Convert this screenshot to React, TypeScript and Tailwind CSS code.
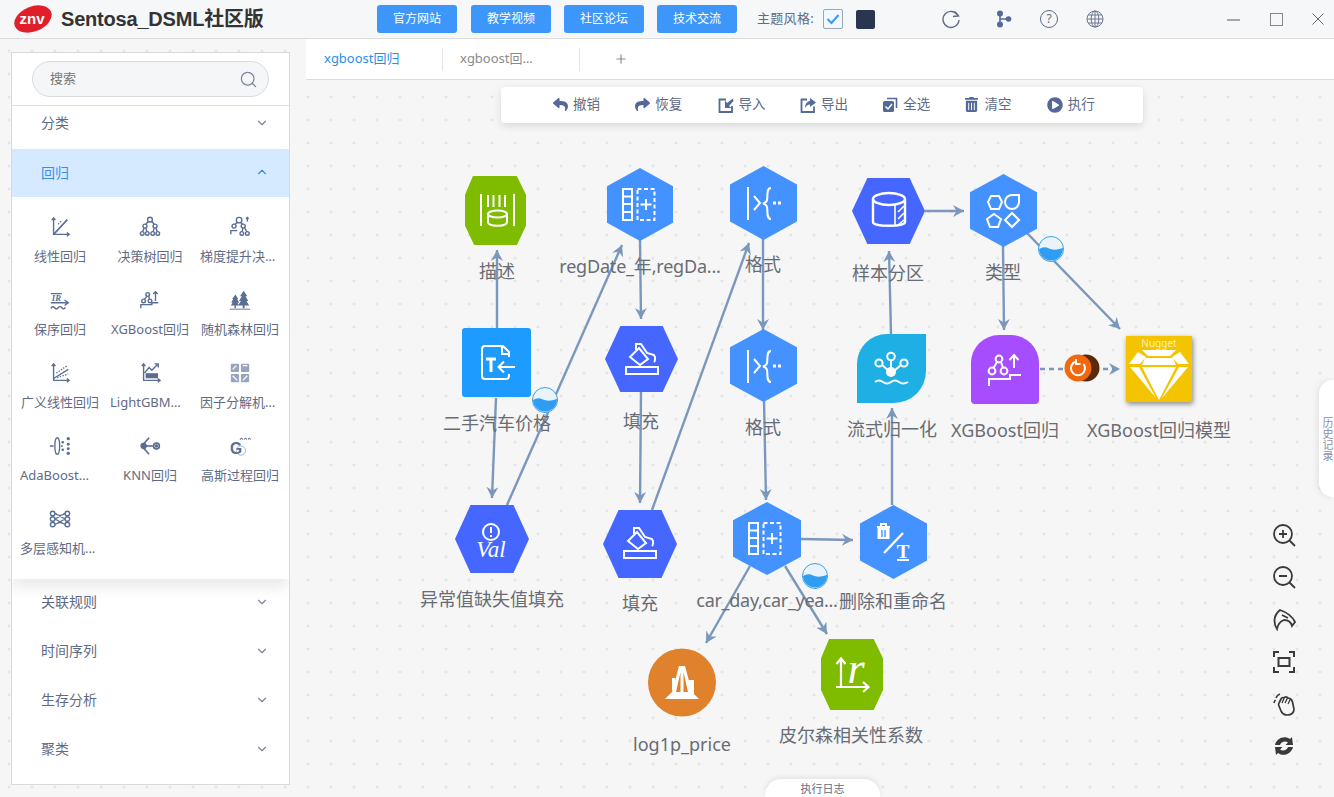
import React from "react";
import { FaReply, FaShare, FaTrashAlt, FaPlayCircle } from "react-icons/fa";
import { ChevronDown, ChevronUp, Search, Plus } from "lucide-react";

const ptHex = (w: number, h: number) => `${w / 2},0 ${w},${h * 0.25} ${w},${h * 0.75} ${w / 2},${h} 0,${h * 0.75} 0,${h * 0.25}`;
const flatHex = (w: number, h: number) => `${w * 0.21},0 ${w * 0.79},0 ${w},${h / 2} ${w * 0.79},${h} ${w * 0.21},${h} 0,${h / 2}`;
const octa = (w: number, h: number) => `${w * 0.13},0 ${w * 0.85},0 ${w},${h * 0.27} ${w},${h * 0.72} ${w * 0.85},${h} ${w * 0.15},${h} 0,${h * 0.72} 0,${h * 0.27}`;

const W = { fill: "none", stroke: "#fff", strokeWidth: 2 } as const;

const DatasetIcon = () => (
  <g {...W}>
    <rect x="16" y="21" width="9" height="31" />
    <path d="M16 28.5H25M16 36H25M16 44H25" />
    <rect x="30.5" y="21" width="17" height="31" strokeDasharray="4 2.5" />
    <path d="M39 31V42M33.5 36.5H44.5" />
  </g>
);
const FormatIcon = () => (
  <g {...W}>
    <path d="M18 21V54M24 30L30 37L24 44" />
    <path d="M41 22C36 22 38 30 37 34C36.5 36 35 37 33 37.5C35 38 36.5 39 37 41C38 45 36 53 41 53" />
    <path d="M43 37H46M48 37H51" strokeWidth="3" />
  </g>
);
const FillIcon = () => (
  <g {...W}>
    <rect x="21" y="41" width="32" height="7" />
    <path d="M25 31L34 22L43 33L35 39Z" />
    <path d="M31 24L31 18H36L42 27L49 29C51 32 50 35 49 36" />
  </g>
);
const Bubble = ({ cls }: { cls: string }) => (
  <svg className={`absolute ${cls}`} width="28" height="28" viewBox="0 0 28 28">
    <circle cx="14" cy="14" r="12.5" fill="#eaf3fa" stroke="#3aa0ea" strokeWidth="1" />
    <path d="M2 14Q7 11 12 13.5T26 13A12 12 0 0 1 2 14Z" fill="#2f9df2" />
  </svg>
);

function Label({ cls, children }: { cls: string; children: React.ReactNode }) {
  return <div className={`absolute -translate-x-1/2 -translate-y-1/2 whitespace-nowrap text-[18px] leading-6 text-[#686c74] ${cls}`}>{children}</div>;
}

function Diagram() {
  const edges = [
    [497, 328, 497, 250], [496, 398, 492, 498], [507, 505, 622, 245], [640, 240, 641, 319], [641, 392, 640, 503],
    [652, 510, 749, 243], [763, 238, 763, 330], [764, 400, 766, 500], [801, 539, 853, 540], [750, 566, 706, 643],
    [785, 566, 827, 634], [892, 505, 892, 408], [891, 334, 889, 251], [925, 211, 964, 211], [1003, 245, 1004, 330], [1027, 233, 1120, 329],
  ];
  return (
    <div className="absolute left-[-306px] top-[-80px] h-[797px] w-[1334px]">
      <svg className="absolute left-0 top-0" width="1334" height="797">
        <defs>
          <marker id="ah" markerUnits="userSpaceOnUse" markerWidth="14" markerHeight="14" refX="11" refY="6" orient="auto">
            <path d="M0 0L11 6L0 12L3.5 6Z" fill="#7b98bc" />
          </marker>
        </defs>
        {edges.map((e, i) => (
          <line key={i} x1={e[0]} y1={e[1]} x2={e[2]} y2={e[3]} stroke="#7b98bc" strokeWidth="2.4" markerEnd="url(#ah)" />
        ))}
        <line x1="1040" y1="369" x2="1120" y2="369" stroke="#7b98bc" strokeWidth="2.4" strokeDasharray="5 4" markerEnd="url(#ah)" />
      </svg>

      <svg className="absolute left-[465px] top-[176px]" width="61" height="69">
        <polygon points={octa(61, 69)} fill="#7fbc00" />
        <g {...W}>
          <path d="M16 18V50M49 18V50M23 19V31M28.5 19V31M34.5 19V31M40 19V31" />
          <ellipse cx="32.5" cy="38" rx="9.5" ry="3.5" />
          <path d="M23 38V46C23 51 42 51 42 46V38" />
        </g>
      </svg>

      <svg className="absolute left-[607px] top-[168px]" width="66" height="73">
        <polygon points={ptHex(66, 73)} fill="#4392ff" />
        <DatasetIcon />
      </svg>
      <svg className="absolute left-[730px] top-[166px]" width="67" height="74">
        <polygon points={ptHex(67, 74)} fill="#4392ff" />
        <FormatIcon />
      </svg>
      <svg className="absolute left-[730px] top-[329px]" width="67" height="73">
        <polygon points={ptHex(67, 73)} fill="#4392ff" />
        <FormatIcon />
      </svg>

      <svg className="absolute left-[852px] top-[178px]" width="73" height="66">
        <polygon points={flatHex(73, 66)} fill="#4566ff" />
        <g {...W} strokeWidth="2.4">
          <ellipse cx="37" cy="21" rx="16" ry="6" />
          <path d="M21 21V44C21 49 53 49 53 44V21" />
          <path d="M43 27V47M46 34L52 28M46 41L52 35M46 47L52 42" strokeWidth="1.6" />
        </g>
      </svg>

      <svg className="absolute left-[970px] top-[174px]" width="67" height="73">
        <polygon points={ptHex(67, 73)} fill="#4392ff" />
        <g {...W}>
          <polygon points="21,22 29,22 32,28 29,35 21,35 18,28" />
          <path d="M42 21H49V28A7 7 0 1 1 35 28A7 7 0 0 1 42 21Z" />
          <polygon points="24,40 31,45 28,53 20,53 17,45" />
          <polygon points="42,39 49,46 42,53 35,46" />
        </g>
      </svg>

      <svg className="absolute left-[462px] top-[328px]" width="69" height="69">
        <rect width="69" height="69" rx="3" fill="#1e9bff" />
        <g {...W}>
          <path d="M47 29V24L41 18H23A3 3 0 0 0 20 21V48A3 3 0 0 0 23 51H44A3 3 0 0 0 47 48V46" />
          <path d="M40 18V26H47" />
          <path d="M24 31H34M29 31V44" strokeWidth="3" />
          <path d="M53 39H37M42 33.5L36.5 39L42 44.5" />
        </g>
      </svg>

      <svg className="absolute left-[605px] top-[326px]" width="73" height="66">
        <polygon points={flatHex(73, 66)} fill="#4566ff" />
        <FillIcon />
      </svg>

      <svg className="absolute left-[857px] top-[334px]" width="69" height="69">
        <path d="M30 0H69V37A32 32 0 0 1 37 69H0V30A30 30 0 0 1 30 0Z" fill="#1eb0e4" />
        <g {...W}>
          <circle cx="22" cy="29" r="3.6" />
          <circle cx="34" cy="22.5" r="3.8" />
          <circle cx="47" cy="29" r="3.6" />
          <path d="M25 31L32 37M34 27V35M44 31L37 37" />
          <path d="M18 48Q22 45 26 48T34 48T42 48T51 48" />
        </g>
        <circle cx="34" cy="38" r="5" fill="#fff" />
      </svg>

      <svg className="absolute left-[971px] top-[335px]" width="68" height="69">
        <path d="M28 0H40A28 28 0 0 1 68 28V65A4 4 0 0 1 64 69H4A4 4 0 0 1 0 65V28A28 28 0 0 1 28 0Z" fill="#a64dff" />
        <g {...W}>
          <circle cx="28" cy="24" r="3.4" />
          <circle cx="21" cy="36" r="3.4" />
          <circle cx="33" cy="36" r="3.4" />
          <path d="M26 27L22.5 33M30 27L32 33" />
          <path d="M43 33V21M38.5 25L43 20L47.5 25" />
          <path d="M18 51V44H39V40H50" />
        </g>
      </svg>

      <div className="absolute left-[1126px] top-[336px] h-[66px] w-[66px] bg-[#f5c400] shadow-[1px_2px_5px_rgba(0,0,0,0.45)]">
        <div className="text-center text-[10px] leading-[14px] text-[#fdf0b8]">Nugget</div>
        <svg className="absolute left-0 top-0" width="66" height="66">
          <path d="M16 14H50L44 20H22Z M12 16L20 21L14 28H3Z M54 16L46 21L52 28H63Z M19 22H47L50 29H16Z M16 31H50L33 64Z M4 31H13L30 62Z M62 31H53L36 62Z" fill="#fff" />
        </svg>
      </div>

      <svg className="absolute left-[1063px] top-[354px]" width="38" height="30">
        <circle cx="23" cy="14" r="13.5" fill="#5c2a08" />
        <circle cx="15" cy="14" r="13.5" fill="#f2680c" />
        <path d="M13 7.5A7 7 0 1 0 20.5 10M13 5V10H17.5" fill="none" stroke="#fff" strokeWidth="2" />
      </svg>

      <svg className="absolute left-[455px] top-[505px]" width="74" height="68">
        <polygon points={flatHex(74, 68)} fill="#4566ff" />
        <circle cx="36" cy="27" r="8" {...W} />
        <path d="M36 22V28M36 30V32" {...W} />
        <text x="36" y="52" textAnchor="middle" fill="#fff" fontSize="23" fontStyle="italic" fontFamily="Liberation Serif, serif">Val</text>
      </svg>

      <svg className="absolute left-[603px] top-[510px]" width="74" height="68">
        <polygon points={flatHex(74, 68)} fill="#4566ff" />
        <FillIcon />
      </svg>

      <svg className="absolute left-[733px] top-[502px]" width="68" height="73">
        <polygon points={ptHex(68, 73)} fill="#4392ff" />
        <DatasetIcon />
      </svg>

      <svg className="absolute left-[860px] top-[505px]" width="67" height="74">
        <polygon points={ptHex(67, 74)} fill="#4392ff" />
        <g {...W}>
          <path d="M17 22H30M21 22V19H26V22" />
          <path d="M18.5 24H28.5V33H18.5Z" fill="#fff" />
          <path d="M22 25V32M25 25V32" strokeWidth="1.4" stroke="#4392ff" />
          <path d="M24 48L43 28" strokeWidth="2.4" />
          <path d="M37 55H49" />
        </g>
        <text x="43" y="53" textAnchor="middle" fill="#fff" fontSize="19" fontWeight="bold" fontFamily="Liberation Serif, serif">T</text>
      </svg>

      <svg className="absolute left-[648px] top-[648px]" width="68" height="69">
        <circle cx="34" cy="34.5" r="34" fill="#e0812b" />
        <g fill="#fff">
          <path d="M17 51L24 44H44L51 51Z" />
          <path d="M31 18H37L44 44H40L35.5 24V44H32.5V24L28 44H24Z" />
          <path d="M24 30H27V42H24ZM41 32H46V46H41Z" />
        </g>
      </svg>

      <svg className="absolute left-[821px] top-[639px]" width="62" height="71">
        <polygon points={octa(62, 71)} fill="#7fbc00" />
        <g {...W} strokeWidth="2.2">
          <path d="M20 48V20M15.5 25L20 19.5L24.5 25" />
          <path d="M15 48H47M42 43L47.5 48L42 53" />
        </g>
        <text x="35" y="44" textAnchor="middle" fill="#fff" fontSize="44" fontStyle="italic" fontFamily="Liberation Serif, serif">r</text>
      </svg>

      <Bubble cls="left-[531px] top-[386px]" />
      <Bubble cls="left-[1037px] top-[235px]" />
      <Bubble cls="left-[801px] top-[562px]" />

      <Label cls="left-[497px] top-[271px]">描述</Label>
      <Label cls="left-[640px] top-[266px] tracking-[-0.2px]">regDate_年,regDa...</Label>
      <Label cls="left-[763px] top-[264px]">格式</Label>
      <Label cls="left-[888px] top-[273px]">样本分区</Label>
      <Label cls="left-[1003px] top-[272px]">类型</Label>
      <Label cls="left-[497px] top-[423px]">二手汽车价格</Label>
      <Label cls="left-[641px] top-[421px]">填充</Label>
      <Label cls="left-[763px] top-[427px]">格式</Label>
      <Label cls="left-[892px] top-[429px]">流式归一化</Label>
      <Label cls="left-[1005px] top-[430px]">XGBoost回归</Label>
      <Label cls="left-[1159px] top-[430px]">XGBoost回归模型</Label>
      <Label cls="left-[492px] top-[599px]">异常值缺失值填充</Label>
      <Label cls="left-[640px] top-[603px]">填充</Label>
      <Label cls="left-[767px] top-[600px] tracking-[-0.3px]">car_day,car_yea...</Label>
      <Label cls="left-[893px] top-[601px]">删除和重命名</Label>
      <Label cls="left-[682px] top-[744px]">log1p_price</Label>
      <Label cls="left-[851px] top-[735px]">皮尔森相关性系数</Label>
    </div>
  );
}

const S = { fill: "none", stroke: "#5a6d93", strokeWidth: 1.5 } as const;
const modelIcons: [string, React.ReactNode][] = [
  ["线性回归", <g {...S}><path d="M5 2V20H22M3 4.5L5 2L7 4.5M19.5 18L22 20L19.5 22" /><path d="M5 20L20 4" strokeWidth="1.8" /><path d="M10 9L14 5" strokeDasharray="1.5 1.5" /></g>],
  ["决策树回归", <g {...S}><circle cx="12" cy="4" r="2.6" /><circle cx="6.5" cy="11" r="2.2" /><circle cx="17.5" cy="11" r="2.2" /><circle cx="3.5" cy="19" r="2" /><circle cx="9" cy="19" r="2" /><circle cx="15" cy="19" r="2" /><circle cx="20.5" cy="19" r="2" /><path d="M10 6L7.5 9M14 6L16.5 9M5.5 13L4 17M7.5 13L8.5 17M16.5 13L15.5 17M18.5 13L20 17" /></g>],
  ["梯度提升决策树回归", <g {...S}><circle cx="11" cy="4.5" r="3" /><circle cx="5.5" cy="11" r="2.2" /><circle cx="15.5" cy="11" r="2.2" /><circle cx="14" cy="19" r="2" /><circle cx="20" cy="19" r="2" /><path d="M9 7L6.5 9M13 7L15 9M15 13L14.5 17M17 13L19.5 17M2 20V16H9M20 6V1.5M18.5 3L20 1.5L21.5 3" /></g>],
  ["保序回归", <g {...S}><path d="M2 5H14M2 15H20M17 12L21 15L17 18" /><path d="M2 21Q4 18 6 20.5T10 20.5T14 20.5T18 20" /><text x="3" y="13" fontSize="9.5" fontStyle="italic" fontWeight="bold" fill="#5a6d93" stroke="none" fontFamily="Liberation Serif, serif">IR</text></g>],
  ["XGBoost回归", <g {...S}><circle cx="9.5" cy="6" r="2" /><circle cx="5" cy="13" r="2" /><circle cx="12" cy="13" r="2" /><path d="M8.5 8L6 11M10.5 8L11.5 11M18 13V3M15.5 5.5L18 3L20.5 5.5M2 21V17H14V15H21" /></g>],
  ["随机森林回归", <g fill="#5a6d93" stroke="none"><path d="M16 2L20 8H18L21 13H19L22 18H17V21H15V18H10L13 13H11L14 8H12Z" /><path d="M7 6L10 11H9L11 15H9L11 18H7.5V21H6V18H2L4 15H2.5L4.5 11H3.5Z" /><path d="M1 21.5H23V22.5H1Z" /></g>],
  ["广义线性回归", <g {...S}><path d="M5 2V20H22M3 4.5L5 2L7 4.5M19.5 18L22 20L19.5 22" /><path d="M5 18L21 8" /><path d="M8 12L20 4M9 17L21 13" strokeDasharray="1.5 1.5" /></g>],
  ["LightGBM回归", <g {...S}><path d="M5 2V20H23M3 4.5L5 2L7 4.5M20.5 18L23 20L20.5 22" /><path d="M6 12L11 6L14 9L21 2M17 2H21V6" /><rect x="8" y="13" width="12" height="4" fill="#5a6d93" /></g>],
  ["因子分解机回归", <g fill="#9aa5bc" stroke="none"><rect x="2" y="2" width="9" height="9" rx="1" /><rect x="13" y="2" width="9" height="9" rx="1" /><rect x="2" y="13" width="9" height="9" rx="1" /><rect x="13" y="13" width="9" height="9" rx="1" /><path d="M4 8L8 4M15 4H20M4 15L9 20M15 20L20 15" stroke="#fff" strokeWidth="1.4" /></g>],
  ["AdaBoost回归", <g {...S}><ellipse cx="9" cy="12" rx="2.6" ry="9" /><path d="M1 12H5M13 12H15" /><g fill="#5a6d93" stroke="none"><circle cx="15" cy="8" r="1.4" /><circle cx="15" cy="16" r="1.4" /><circle cx="21" cy="4" r="1.8" /><circle cx="21" cy="10" r="1.6" /><circle cx="21" cy="15" r="1.6" /><circle cx="21" cy="20" r="1.8" /></g></g>],
  ["KNN回归", <g {...S} strokeWidth="1.8"><path d="M11 3L3 12L11 21" /><path d="M5 12H15" /><circle cx="5" cy="12" r="2.6" fill="#5a6d93" /><circle cx="19" cy="12" r="3.2" /><circle cx="19" cy="12" r="1" fill="#5a6d93" /></g>],
  ["高斯过程回归", <g><text x="1" y="21" fontSize="17" fontWeight="bold" fill="#5a6d93" fontFamily="Liberation Sans, sans-serif">G</text><circle cx="13" cy="17" r="5" fill="none" stroke="#8b99b5" strokeWidth="0.8" /><path d="M12 5Q14 2 15 5M16.5 5Q18 2 19.5 5M21 5Q22 2 23.5 5" fill="none" stroke="#5a6d93" strokeWidth="1.2" /></g>],
  ["多层感知机回归", <g {...S}><circle cx="4" cy="6" r="2.5" /><circle cx="4" cy="12" r="2.5" /><circle cx="4" cy="18" r="2.5" /><circle cx="20" cy="6" r="2.5" /><circle cx="20" cy="12" r="2.5" /><circle cx="20" cy="18" r="2.5" /><path d="M6.5 6L17.5 12M6.5 18L17.5 12M6.5 12L17.5 6M6.5 12L17.5 18M6.5 6Q12 10 17.5 6M6.5 18Q12 14 17.5 18" /></g>],
];

function Sidebar() {
  const Row = ({ t }: { t: string }) => (
    <div className="flex h-[49px] items-center justify-between pl-[29px] pr-[20px] text-[14px] text-[#5f6b85]">
      <span>{t}</span>
      <ChevronDown size={14} color="#7d84a0" strokeWidth={2} />
    </div>
  );
  return (
    <div className="h-full overflow-hidden border border-[#d9d9d9] bg-white">
      <div className="flex h-[53px] items-center border-b border-[#dcdfe6] pl-5 pr-5">
        <div className="flex h-[36px] w-[237px] items-center justify-between rounded-[18px] border border-[#d8dbe0] bg-[#f5f6f8] pl-[17px] pr-[10px] text-[13px] text-[#777]">
          <span>搜索</span>
          <Search size={19} color="#7d84a0" strokeWidth={1.6} />
        </div>
      </div>
      <div className="flex h-[43px] items-center justify-between pb-[10px] pl-[29px] pr-[20px] text-[14px] text-[#5f6b85]">
        <span>分类</span>
        <ChevronDown size={14} color="#7d84a0" strokeWidth={2} />
      </div>
      <div className="relative z-10 shadow-[0_8px_14px_rgba(0,0,0,0.09)]">
        <div className="flex h-[48px] items-center justify-between bg-[#d6eaff] pb-[2px] pl-[29px] pr-[20px] text-[14px] text-[#3a8ee6]">
          <span>回归</span>
          <ChevronUp size={14} color="#3a8ee6" strokeWidth={2} />
        </div>
        <div className="grid h-[382px] grid-cols-[90px_90px_90px] auto-rows-[73px] content-start bg-white pl-[3px] pt-[19px]">
          {modelIcons.map(([t, ic]) => (
            <div key={t} className="flex flex-col items-center">
              <svg width="22" height="22" viewBox="0 0 24 24">{ic}</svg>
              <div className="mt-[8px] w-[80px] truncate text-center text-[13px] leading-5 text-[#5f6b85]">{t}</div>
            </div>
          ))}
        </div>
      </div>
      <div className="-mt-[2px]">
        <Row t="关联规则" />
        <Row t="时间序列" />
        <Row t="生存分析" />
        <Row t="聚类" />
      </div>
    </div>
  );
}

const B = { fill: "#54699a", stroke: "none" } as const;
const tools: [string, React.ReactNode][] = [
  ["撤销", <FaReply size={15} color="#54699a" />],
  ["恢复", <FaShare size={15} color="#54699a" />],
  ["导入", <svg width="16" height="16" viewBox="0 0 16 16"><path d="M8 2.5H1.5V15H14V9" fill="none" stroke="#54699a" strokeWidth="1.8" /><path d="M15 1.5L9 6L7 3.5V11H13.5L11 9L15.5 4Z" {...B} /></svg>],
  ["导出", <svg width="16" height="16" viewBox="0 0 16 16"><path d="M7 2.5H1.5V15H14V9.5" fill="none" stroke="#54699a" strokeWidth="1.8" /><path d="M10 1L16 5.5L10 10V7.5C7.5 7.5 6 9 5 11C5 7 7 4.5 10 4Z" {...B} /></svg>],
  ["全选", <svg width="16" height="16" viewBox="0 0 16 16"><path d="M5 1.5H14.5V11" fill="none" stroke="#54699a" strokeWidth="1.6" /><rect x="1" y="4" width="11" height="11" rx="1.5" {...B} /><path d="M3.5 9.5L6 12L10 7" fill="none" stroke="#fff" strokeWidth="1.5" /></svg>],
  ["清空", <FaTrashAlt size={15} color="#54699a" />],
  ["执行", <FaPlayCircle size={16} color="#54699a" />],
];

const TOPBTN = "flex h-7 w-20 items-center justify-center rounded-[3px] bg-[#3d97fb] text-[12px] text-white";

export default function App() {
  return (
    <div className="flex h-[797px] w-full flex-col overflow-hidden bg-[#f6f6f6] font-['Noto_Sans','Noto_Sans_CJK_SC',sans-serif]">
      <header className="flex h-[39px] shrink-0 items-center border-b border-[#dcdcdc] bg-[#f6f7f9]">
        <svg className="ml-[14px]" width="38" height="28" viewBox="0 0 38 28">
          <ellipse cx="19" cy="14" rx="19.5" ry="12.5" fill="#e01f2a" transform="rotate(-22 19 14)" />
          <text x="18" y="19" textAnchor="middle" fill="#fff" fontSize="15" fontWeight="bold" fontFamily="Liberation Sans, sans-serif">znv</text>
        </svg>
        <div className="ml-[9px] w-[316px] text-[20px] font-bold tracking-[-0.2px] text-[#333] font-['Liberation_Sans','Noto_Sans_CJK_SC',sans-serif]">Sentosa_DSML社区版</div>
        <div className={TOPBTN}>官方网站</div>
        <div className={`ml-[14px] ${TOPBTN}`}>教学视频</div>
        <div className={`ml-[13px] ${TOPBTN}`}>社区论坛</div>
        <div className={`ml-[13px] ${TOPBTN}`}>技术交流</div>
        <div className="ml-[20px] text-[13px] tracking-[0.3px] text-[#5f6b85]">主题风格:</div>
        <div className="ml-[9px] flex h-5 w-5 items-center justify-center rounded-[2px] border border-[#9aa5b8] bg-[#f2f8ff]">
          <svg width="14" height="12" viewBox="0 0 14 12"><path d="M1.5 6L5.5 10L12.5 2" fill="none" stroke="#3d97fb" strokeWidth="2" /></svg>
        </div>
        <div className="ml-[13px] h-[19px] w-[19px] rounded-[2px] bg-[#2a3550]" />
        <svg className="ml-[66px]" width="20" height="20" viewBox="0 0 20 20">
          <path d="M17 6.5A8 8 0 1 0 18 11" fill="none" stroke="#5f6b85" strokeWidth="1.4" />
          <path d="M13.5 2.5L17.5 7L12 7.5" fill="none" stroke="#5f6b85" strokeWidth="1.4" />
        </svg>
        <svg className="ml-[35px]" width="16" height="18" viewBox="0 0 16 18">
          <path d="M4 4V14M4 9H12" stroke="#54699a" strokeWidth="1.6" />
          <circle cx="4" cy="3.5" r="3" fill="#54699a" />
          <circle cx="4" cy="14.5" r="3" fill="#54699a" />
          <circle cx="12.5" cy="9" r="2.8" fill="#54699a" />
        </svg>
        <div className="ml-[28px] flex h-[18px] w-[18px] items-center justify-center rounded-full border-[1.3px] border-[#5f6b85] text-[12px] leading-none text-[#5f6b85]">?</div>
        <svg className="ml-[28px]" width="18" height="18" viewBox="0 0 18 18">
          <g fill="none" stroke="#6d7890" strokeWidth="1">
            <circle cx="9" cy="9" r="8" />
            <ellipse cx="9" cy="9" rx="3.8" ry="8" />
            <path d="M9 1V17M1 9H17M2.2 5H15.8M2.2 13H15.8" />
          </g>
        </svg>
        <div className="ml-auto flex items-center pr-[10px]">
          <svg width="13" height="13" viewBox="0 0 13 13"><path d="M0 7H13" stroke="#666" strokeWidth="1.1" /></svg>
          <svg className="ml-[30px]" width="13" height="13" viewBox="0 0 13 13"><rect x="0.5" y="0.5" width="12" height="12" fill="none" stroke="#888" /></svg>
          <svg className="ml-[29px]" width="12" height="12" viewBox="0 0 12 12"><path d="M0.5 0.5L11.5 11.5M11.5 0.5L0.5 11.5" stroke="#666" /></svg>
        </div>
      </header>

      <div className="flex min-h-0 flex-1 bg-[radial-gradient(circle,#dfdfdf_1px,transparent_1.4px)] bg-[length:23px_23px] bg-[position:-2.5px_0.5px]">
        <aside className="h-full w-[306px] shrink-0 pb-[12px] pl-[11px] pr-[16px] pt-[13px]">
          <Sidebar />
        </aside>
        <main className="flex min-w-0 flex-1 flex-col">
          <div className="flex h-[41px] shrink-0 items-center border-b border-[#dcdcdc] bg-white text-[13px]">
            <div className="flex h-[23px] w-[137px] items-center border-r border-[#e4e4e4] pl-[18px] text-[#2b8de6]">xgboost回归</div>
            <div className="flex h-[23px] w-[137px] items-center border-r border-[#e4e4e4] pl-[17px] text-[#8a8a8a]"><span className="w-[76px] truncate">xgboost回归模型</span></div>
            <Plus className="ml-[34px]" size={14} color="#8a8a8a" />
          </div>
          <div className="relative min-h-0 flex-1">
            <Diagram />
            <div className="absolute left-[195px] top-[7px] flex h-9 w-[642px] items-center rounded-[4px] bg-white pb-[1px] pl-[52px] text-[13.5px] text-[#5f6b85] shadow-[0_3px_8px_rgba(0,0,0,0.12)]">
              {tools.map(([t, ic]) => (
                <div key={t} className="flex w-[82.3px] items-center gap-[5px]">{ic}<span>{t}</span></div>
              ))}
            </div>

            <div className="absolute bottom-[39px] right-[38px] flex flex-col items-center gap-[18.2px] text-[#3a3a3a]">
              <svg width="24" height="24" viewBox="0 0 24 24" fill="none" stroke="#3a3a3a" strokeWidth="1.8"><circle cx="11" cy="11" r="9" /><path d="M7 11H15M11 7V15M17.5 17.5L23 23" /></svg>
              <svg width="24" height="24" viewBox="0 0 24 24" fill="none" stroke="#3a3a3a" strokeWidth="1.8"><circle cx="11" cy="11" r="9" /><path d="M7 11H15M17.5 17.5L23 23" /></svg>
              <svg width="24" height="24" viewBox="0 0 24 24" fill="none" stroke="#3a3a3a" strokeWidth="1.8"><path d="M5 22C1 15 1 9 8 3C14 5 20 9 23 15L20 19C19 15 17 13 12 13C9 14 6 17 5 22Z" /><path d="M10 8L16 11" /></svg>
              <svg width="24" height="24" viewBox="0 0 24 24" fill="none" stroke="#3a3a3a" strokeWidth="2"><path d="M2 7V2H7M17 2H22V7M22 17V22H17M7 22H2V17" /><rect x="6.5" y="8" width="11" height="8" /></svg>
              <svg width="24" height="24" viewBox="0 0 24 24" fill="none" stroke="#3a3a3a" strokeWidth="1.7"><path d="M4 6Q5 3 8 2M2 11Q2.5 9 3.5 8" /><path d="M7 11L9 7Q10 5 12 6L13 5Q15 4.5 16 6L18 6.5Q20 7.5 20.5 10L22 17Q22 23 15 23Q11 23 9 19L7 14Q6 12 7 11Z" /><path d="M10 11L12 6.5M13 11L15.5 6M16 12L18.5 7" strokeWidth="1.3" /></svg>
              <svg width="24" height="24" viewBox="0 0 24 24" fill="#3a3a3a"><path d="M20 3L21 11H13.5L16 8.5C13 6.5 9 8 8 11H3C4 5 12 0.5 18 5Z" /><path d="M4 21L3 13H10.5L8 15.5C11 17.5 15 16 16 13H21C20 19 12 23.5 6 19Z" /></svg>
            </div>

            <div className="absolute right-0 top-[300px] flex h-[117px] w-[15px] items-center justify-center rounded-tl-[14px] rounded-bl-[14px] bg-white pl-[2px] text-[11px] leading-[11px] text-[#8a90b0] shadow-[-2px_0_6px_rgba(0,0,0,0.08)] [text-orientation:upright] [writing-mode:vertical-rl]">历史记录</div>
            <div className="absolute bottom-0 left-[459px] flex h-[18px] w-[115px] items-center justify-center rounded-t-[16px] bg-white text-[11px] leading-none text-[#5f6b85] shadow-[0_-2px_5px_rgba(0,0,0,0.08)]">执行日志</div>
          </div>
        </main>
      </div>
    </div>
  );
}
